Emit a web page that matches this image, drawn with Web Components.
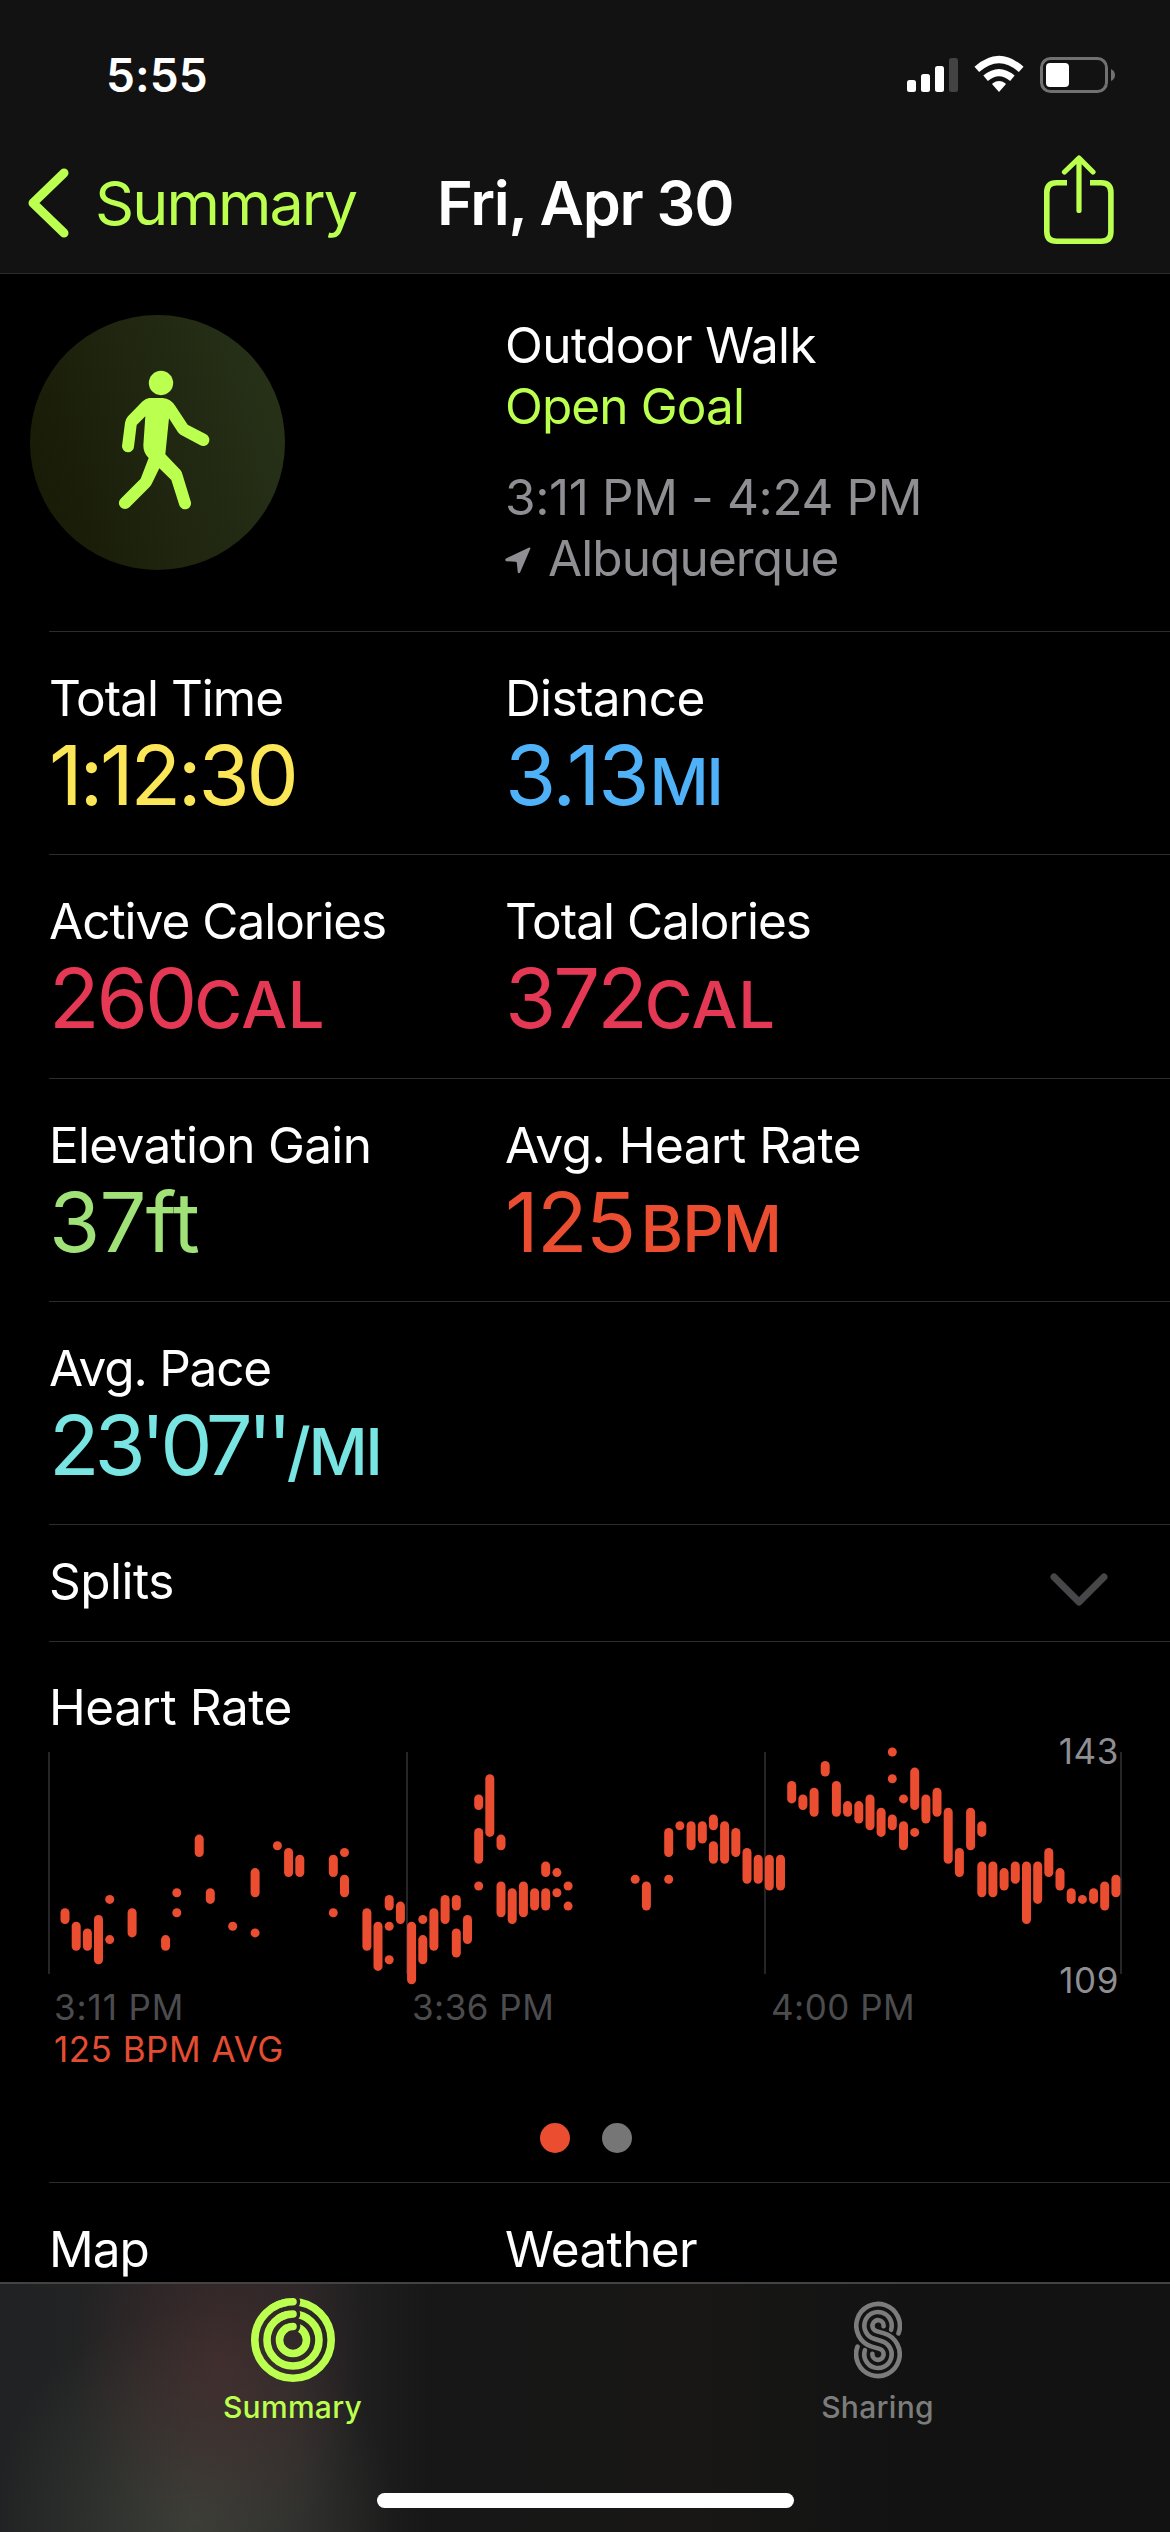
<!DOCTYPE html>
<html lang="en">
<head>
<meta charset="utf-8">
<title>Fri, Apr 30</title>
<style>
  body {
    margin: 0;
    background: #000;
    font-family: Inter, Roboto, "Liberation Sans", sans-serif;
    color: #fff;
  }
</style>
</head>
<body>
<workout-screen></workout-screen>

<script>
class StatusBar extends HTMLElement {
  constructor() {
    super();
    this.attachShadow({ mode: 'open' }).innerHTML = `
    <style>
    :host {
        display: flex;
        align-items: center;
        justify-content: space-between;
        height: 149px;
        padding: 0 54px 0 106px;
    }

    time {
        font-size: 46px;
        font-weight: 600;
        letter-spacing: 0.1px;
    }

    svg {
        display: block;
    }
    </style>
    <time>5:55</time>
    <svg width="210" height="40" viewBox="906 54 210 40">
      <g fill="#fff">
        <rect x="907" y="79" width="9" height="12" rx="2.5"/>
        <rect x="921" y="73" width="9" height="18" rx="2.5"/>
        <rect x="935" y="65" width="9" height="26" rx="2.5"/>
        <rect x="949" y="57" width="9" height="34" rx="2.5" fill="#434343"/>
        <path d="M999 91 L992.4 83.6 Q991.8 82.8 992.7 82.2 Q999 78 1005.3 82.2 Q1006.2 82.8 1005.6 83.6Z"/>
      </g>
      <g fill="none" stroke="#fff" stroke-width="7">
        <path d="M985.6 77.3 Q999 66 1012.4 77.3"/>
        <path d="M976.8 68.4 Q999 48.6 1021.2 68.4"/>
      </g>
      <rect x="1041.5" y="57.5" width="65" height="33" rx="9" fill="none" stroke="#717171" stroke-width="3"/>
      <rect x="1046" y="62" width="23" height="24" rx="4" fill="#fff"/>
      <path d="M1111 68 Q1115 70 1115 74 Q1115 78 1111 80Z" fill="#717171"/>
    </svg>`;
  }
}

class NavBar extends HTMLElement {
  constructor() {
    super();
    this.attachShadow({ mode: 'open' }).innerHTML = `
    <style>
    :host {
        display: grid;
        grid-template-columns: 437px 1fr auto;
        align-items: center;
        height: 108px;
        padding: 0 54px 16px 0;
        border-bottom: 1px solid #2b2b2b;
        font-size: 61px;
        line-height: 108px;
    }

    .back {
        display: flex;
        align-items: center;
        gap: 25px;
        padding-left: 28px;
        color: #bbff4f;
        letter-spacing: -1.9px;
    }

    .title {
        font-weight: 600;
        letter-spacing: -1.25px;
    }

    svg {
        display: block;
    }
    </style>
    <div class="back">
      <svg width="42" height="72" viewBox="28 167 42 72" fill="none" stroke="#bbff4f" stroke-width="9" stroke-linecap="round" stroke-linejoin="round">
        <path d="M64 173 L33 203 L64 233"/>
      </svg>
      <slot name="back"></slot>
    </div>
    <div class="title"><slot></slot></div>
    <svg width="74" height="96" viewBox="1042 155 74 96" fill="none" stroke="#bbff4f" stroke-width="5.6">
      <path d="M1067 182.8 H1056.5 Q1046.8 182.8 1046.8 192.5 V231.5 Q1046.8 241.2 1056.5 241.2 H1101.2 Q1110.9 241.2 1110.9 231.5 V192.5 Q1110.9 182.8 1101.2 182.8 H1090"/>
      <path d="M1079 158.5 V210.5 M1064.5 172 L1079 158 L1093 172" stroke-width="5.2" stroke-linecap="round" stroke-linejoin="round"/>
    </svg>`;
  }
}

class WorkoutHeader extends HTMLElement {
  constructor() {
    super();
    this.attachShadow({ mode: 'open' }).innerHTML = `
    <style>
    :host {
        display: grid;
        grid-template-columns: 475px 1fr;
        height: 316px;
        padding: 41px 0 0 30px;
        font-size: 49.5px;
        line-height: 61px;
        letter-spacing: -0.6px;
    }

    .badge {
        width: 255px;
        height: 255px;
        border-radius: 50%;
        background: linear-gradient(72deg, #181b05 8%, #202610 50%, #273118 92%);
    }

    .goal {
        color: #bbff4f;
        letter-spacing: -0.9px;
    }

    .when {
        margin-top: 30px;
        color: #8e8e93;
        letter-spacing: -0.4px;
    }

    .where {
        display: flex;
        align-items: center;
        gap: 17px;
        color: #8e8e93;
        letter-spacing: -0.9px;
    }

    svg {
        display: block;
    }

    .where svg {
        margin-top: 4px;
    }
    </style>
    <div class="badge">
      <svg width="255" height="255" viewBox="30 45 765 765" fill="#bbff4f">
        <circle cx="423" cy="249" r="36.5"/>
        <path d="M388 294 H428 Q452 296 466 318 L503 374 L558 403 A18 18 0 0 1 541 436 L482 404 Q476 400 473 395 L447 355 L436 463 L481 510 Q486 516 487 522 L512 604 A18 18 0 0 1 478 616 L454 540 L418 505 L395 552 Q392 558 388 562 L328 622 A18 18 0 0 1 302 596 L362 536 L386 474 Q370 460 370 436 L376 349 L350 375 L342 440 A18 18 0 0 1 306 438 L315 368 Q316 358 324 349 L368 304 Q378 295 388 294Z"/>
      </svg>
    </div>
    <div>
      <div><slot name="name"></slot></div>
      <div class="goal"><slot name="goal"></slot></div>
      <div class="when"><slot name="when"></slot></div>
      <div class="where">
        <svg width="26" height="27" viewBox="0 0 26 27" fill="#8e8e93"><path d="M24.2 0.4 Q25.8 0.2 25.3 1.8 L15.2 25.3 Q13.8 27.2 12.7 25 L11.9 16 Q11.7 14.9 10.4 14.8 L1.2 14.2 Q-0.7 13 1 11.4Z"/></svg>
        <slot name="where"></slot>
      </div>
    </div>`;
  }
}

// a row of two cells, underlined from the left margin to the screen edge
class MetricRow extends HTMLElement {
  constructor() {
    super();
    this.attachShadow({ mode: 'open' }).innerHTML = `
    <style>
    :host {
        display: grid;
        grid-template-columns: 456px 1fr;
        box-sizing: border-box;
        height: 223.3px;
        margin-left: 49px;
        padding-top: 36px;
        border-top: 1px solid #2c2c2e;
    }
    </style>
    <slot></slot>`;
  }
}

class WorkoutMetric extends HTMLElement {
  connectedCallback() {
    const unit = this.getAttribute('unit') || '';
    this.attachShadow({ mode: 'open' }).innerHTML = `
    <style>
    .label {
        font-size: 49.5px;
        line-height: 60px;
        letter-spacing: var(--label-spacing, -1px);
    }

    .value {
        height: 95px;
        font-size: 83px;
        line-height: 95px;
        font-variant-ligatures: none;
        letter-spacing: var(--value-spacing, -3px);
        color: var(--tint);
    }

    .unit {
        margin-left: var(--unit-gap, 0);
        font-size: 65px;
        line-height: 0;
        font-weight: 500;
        letter-spacing: var(--unit-spacing, 0.5px);
    }
    </style>
    <div class="label">${this.getAttribute('label')}</div>
    <div class="value"><slot></slot><span class="unit">${unit}</span></div>`;
  }
}

class SplitsRow extends HTMLElement {
  constructor() {
    super();
    this.attachShadow({ mode: 'open' }).innerHTML = `
    <style>
    :host {
        display: flex;
        justify-content: space-between;
        box-sizing: border-box;
        height: 117px;
        margin-left: 49px;
        padding-right: 61px;
        border-top: 1px solid #2c2c2e;
        font-size: 49.5px;
        line-height: 112px;
        letter-spacing: -0.5px;
    }

    svg {
        display: block;
        margin-top: 47px;
    }
    </style>
    <div><slot></slot></div>
    <svg width="60" height="36" viewBox="0 0 60 36" fill="none" stroke="#47474a" stroke-width="7" stroke-linecap="round" stroke-linejoin="round">
      <path d="M5 5 L30 30 L55 5"/>
    </svg>`;
  }
}

// [slot, beats below the peak: from, to], slots are about 45 seconds wide
const READINGS = [
  [0, 24, 25], [1, 26, 29], [2, 27, 29], [3, 25, 31], [4, 22, 22], [4, 28, 28], [6, 24, 27],
  [9, 28, 29], [10, 21, 21], [10, 24, 24], [12, 13, 15], [13, 21, 22], [15, 26, 26],
  [17, 18, 21], [17, 27, 27], [19, 14, 14], [20, 15, 18], [21, 16, 18],
  [24, 16, 18], [24, 24, 24], [25, 15, 15], [25, 19, 21], [27, 24, 29], [28, 26, 32],
  [29, 22, 23], [29, 26, 26], [29, 31, 31], [30, 23, 25], [31, 26, 34], [32, 25, 25], [32, 28, 31],
  [33, 24, 29], [34, 22, 25], [35, 22, 23], [35, 27, 30], [36, 25, 28],
  [37, 7, 8], [37, 12, 16], [37, 20, 20], [38, 4, 12], [39, 13, 14], [39, 20, 24],
  [40, 21, 25], [41, 20, 24], [42, 21, 23], [43, 17, 18], [43, 21, 23],
  [44, 18, 18], [44, 21, 21], [45, 20, 20], [45, 23, 23],
  [51, 19, 19], [52, 20, 23], [54, 12, 15], [54, 19, 19], [55, 11, 11], [56, 11, 14], [57, 11, 13],
  [58, 10, 11], [58, 14, 16], [59, 11, 16], [60, 12, 15], [61, 15, 19], [62, 16, 19],
  [63, 16, 20], [64, 16, 20], [65, 5, 7], [66, 7, 8], [67, 6, 9], [68, 2, 3], [69, 5, 9],
  [70, 8, 9], [71, 8, 10], [72, 7, 11], [73, 9, 12], [74, 0, 0], [74, 4, 4], [74, 10, 11],
  [75, 7, 7], [75, 11, 14], [76, 3, 8], [76, 12, 12], [77, 7, 10], [78, 6, 9], [79, 9, 16],
  [80, 15, 18], [81, 9, 14], [82, 11, 12], [82, 17, 21], [83, 17, 21], [84, 18, 20],
  [85, 17, 19], [86, 17, 25], [87, 17, 22], [88, 15, 18], [89, 18, 20],
  [90, 21, 22], [91, 22, 22], [92, 21, 22], [93, 20, 23], [94, 19, 21]
];

class HeartRateChart extends HTMLElement {
  constructor() {
    super();
    this.attachShadow({ mode: 'open' });
  }

  connectedCallback() {
    const bars = READINGS.map(([slot, from, to]) => {
      const x = 60.5 + slot * 11.18;
      const y = 1747.5 + from * 6.7;
      return `<rect x="${x.toFixed(1)}" y="${y.toFixed(1)}" width="9" height="${(9 + (to - from) * 6.7).toFixed(1)}" rx="4.5"/>`;
    }).join('');
    const lines = [48, 406, 764, 1120].map((x) => `<rect x="${x}" y="1752" width="2" height="222"/>`).join('');

    this.shadowRoot.innerHTML = `
    <style>
    :host {
        display: block;
        box-sizing: border-box;
        height: 541px;
        border-top: 1px solid #2c2c2e;
        margin-left: 49px;
        padding-top: 35px;
    }

    .heading {
        font-size: 49.5px;
        line-height: 60px;
        letter-spacing: -0.45px;
    }

    svg {
        display: block;
        margin: -16px 0 0 -49px;
        font-size: 35px;
    }

    .pager {
        display: flex;
        justify-content: center;
        gap: 32px;
        margin: 43px 47px 0 0;
    }

    .pager i {
        width: 30px;
        height: 30px;
        border-radius: 50%;
        background: #767676;
    }

    .pager .on {
        background: #eb4d30;
    }
    </style>
    <div class="heading"><slot></slot></div>
    <svg width="1170" height="359" viewBox="0 1721 1170 359">
      <g fill="#262628">${lines}</g>
      <g fill="#eb4d30">${bars}</g>
      <g fill="#4c4c4e" letter-spacing="0.5">
        <text x="54" y="2020" letter-spacing="0.9">3:11 PM</text>
        <text x="412" y="2020">3:36 PM</text>
        <text x="771" y="2020">4:00 PM</text>
      </g>
      <text x="54" y="2062" fill="#e34d32" letter-spacing="0.5">125 BPM AVG</text>
      <g fill="#8e8e93" text-anchor="end" letter-spacing="0.6">
        <text x="1119" y="1764">143</text>
        <text x="1119" y="1993">109</text>
      </g>
    </svg>
    <div class="pager"><i class="on"></i><i></i></div>`;
  }
}

class TabBar extends HTMLElement {
  constructor() {
    super();
    this.attachShadow({ mode: 'open' }).innerHTML = `
    <style>
    :host {
        display: block;
        box-sizing: border-box;
        height: 250px;
        border-top: 2px solid #434343;
        background:
            radial-gradient(ellipse 150px 190px at 220px 75px, rgba(86, 50, 50, .5), transparent),
            radial-gradient(ellipse 200px 210px at 195px 235px, rgba(74, 80, 68, .6), transparent),
            linear-gradient(90deg, #212223 0, #262526 300px, #171717 430px, #181716 700px, #121212 900px, #121212 100%);
    }

    nav {
        display: grid;
        grid-template-columns: 1fr 1fr;
        height: 209px;
    }
    </style>
    <nav><slot></slot></nav>
    <home-indicator></home-indicator>`;
  }
}

class HomeIndicator extends HTMLElement {
  constructor() {
    super();
    this.attachShadow({ mode: 'open' }).innerHTML = `
    <style>
    :host {
        display: block;
        width: 417px;
        height: 15px;
        margin: 0 auto;
        border-radius: 8px;
        background: #fff;
    }
    </style>`;
  }
}

// three concentric rings, each with a round end tucked into its start
const ring = (r) => `
  <g mask="url(#gap${r})">
    <circle cx="43" cy="43" r="${r}"/>
  </g>
  <mask id="gap${r}" maskUnits="userSpaceOnUse" x="0" y="0" width="86" height="86">
    <rect width="86" height="86" fill="#fff" stroke="none"/>
    <path d="M43 ${43 - r} h0.01" stroke="#000" stroke-width="14.5"/>
  </mask>
  <path d="M${43 - r * 0.5} ${43 - r * 0.866} A${r} ${r} 0 0 1 43 ${43 - r}"/>`;

const ICONS = {
  rings: `<svg width="86" height="86" viewBox="0 0 86 86" fill="none" stroke="currentColor" stroke-width="7.6" stroke-linecap="round">
    ${ring(38.2)}${ring(26)}${ring(13.5)}
  </svg>`,
  sharing: `<svg width="48" height="86" viewBox="0 -4.7 48 86" fill="none" stroke="currentColor" stroke-width="4.6" stroke-linecap="round">
    <path d="M44.5 31.7 A21.8 21.8 0 1 0 17.8 44.9 L25.6 47.2 A5.6 5.6 0 1 1 18.4 52"/>
    <path d="M37.1 28.1 A13.7 13.7 0 1 0 20.1 37.1 L27.9 39.5 A13.7 13.7 0 1 1 10.9 48.5"/>
    <path d="M29.6 24.6 A5.6 5.6 0 1 0 22.4 29.4 L30.2 31.7 A21.8 21.8 0 1 1 3.5 44.9"/>
  </svg>`
};

class TabItem extends HTMLElement {
  connectedCallback() {
    this.attachShadow({ mode: 'open' }).innerHTML = `
    <style>
    :host {
        display: flex;
        flex-direction: column;
        align-items: center;
        padding-top: 13px;
        font-size: 30px;
        font-weight: 500;
        line-height: 40px;
        letter-spacing: 0.3px;
        color: #7c7c7c;
    }

    :host([active]) {
        color: #bbff4f;
    }

    svg {
        display: block;
        margin-bottom: 4px;
    }
    </style>
    ${ICONS[this.getAttribute('icon')]}
    <span><slot></slot></span>`;
  }
}

class WorkoutScreen extends HTMLElement {
  constructor() {
    super();
    this.attachShadow({ mode: 'open' }).innerHTML = `
    <style>
    :host {
        display: flex;
        flex-direction: column;
        width: 1170px;
        height: 2532px;
        overflow: hidden;
    }

    header {
        flex: none;
        background: #121212;
    }

    main {
        flex: 1;
        min-height: 0;
        overflow: hidden;
    }

    tab-bar {
        flex: none;
    }

    .time {
        --tint: #fbe657;
        --value-spacing: -3.3px;
    }

    .distance {
        --tint: #4fb1f8;
        --label-spacing: -0.6px;
        --value-spacing: -2.2px;
        --unit-gap: 2px;
        --unit-spacing: -2.5px;
    }

    .calories {
        --tint: #e53855;
    }

    .elevation {
        --tint: #a1e278;
        --label-spacing: -0.7px;
        --value-spacing: -0.8px;
    }

    .heart {
        --tint: #ea4d30;
        --label-spacing: -0.5px;
        --value-spacing: -1.8px;
        --unit-gap: 6px;
        --unit-spacing: -1px;
    }

    .pace {
        --tint: #78e5e2;
        --label-spacing: -1.2px;
        --value-spacing: -5.2px;
        --unit-spacing: -2.5px;
    }

    .weather {
        --label-spacing: -0.6px;
    }
    </style>
    <header>
      <status-bar></status-bar>
      <nav-bar><span slot="back">Summary</span>Fri, Apr 30</nav-bar>
    </header>
    <main>
      <workout-header>
        <span slot="name">Outdoor Walk</span>
        <span slot="goal">Open Goal</span>
        <span slot="when">3:11 PM - 4:24 PM</span>
        <span slot="where">Albuquerque</span>
      </workout-header>
      <metric-row>
        <workout-metric class="time" label="Total Time">1:12:30</workout-metric>
        <workout-metric class="distance" label="Distance" unit="MI">3.13</workout-metric>
      </metric-row>
      <metric-row>
        <workout-metric class="calories" label="Active Calories" unit="CAL">260</workout-metric>
        <workout-metric class="calories" label="Total Calories" unit="CAL">372</workout-metric>
      </metric-row>
      <metric-row>
        <workout-metric class="elevation" label="Elevation Gain">37ft</workout-metric>
        <workout-metric class="heart" label="Avg. Heart Rate" unit="BPM">125</workout-metric>
      </metric-row>
      <metric-row>
        <workout-metric class="pace" label="Avg. Pace" unit="/MI">23'07''</workout-metric>
      </metric-row>
      <splits-row>Splits</splits-row>
      <heart-rate-chart>Heart Rate</heart-rate-chart>
      <metric-row>
        <workout-metric label="Map"></workout-metric>
        <workout-metric class="weather" label="Weather"></workout-metric>
      </metric-row>
    </main>
    <tab-bar>
      <tab-item icon="rings" active>Summary</tab-item>
      <tab-item icon="sharing">Sharing</tab-item>
    </tab-bar>`;
  }
}

customElements.define('status-bar', StatusBar);
customElements.define('nav-bar', NavBar);
customElements.define('workout-header', WorkoutHeader);
customElements.define('metric-row', MetricRow);
customElements.define('workout-metric', WorkoutMetric);
customElements.define('splits-row', SplitsRow);
customElements.define('heart-rate-chart', HeartRateChart);
customElements.define('home-indicator', HomeIndicator);
customElements.define('tab-bar', TabBar);
customElements.define('tab-item', TabItem);
customElements.define('workout-screen', WorkoutScreen);
</script>
</body>
</html>
